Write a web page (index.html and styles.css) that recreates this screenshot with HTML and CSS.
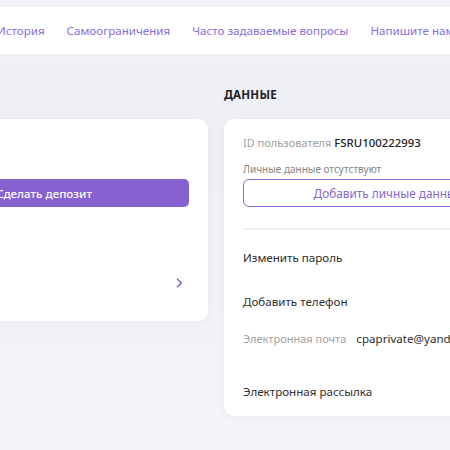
FILE: index.html
```html
<!DOCTYPE html>
<html lang="ru">
<head>
<meta charset="utf-8">
<link rel="stylesheet" href="styles.css">
</head>
<body>
<div class="top-gap"></div>
<nav class="nav">
  <a class="nav-item">История</a>
  <a class="nav-item">Самоограничения</a>
  <a class="nav-item">Часто задаваемые вопросы</a>
  <a class="nav-item">Напишите нам</a>
</nav>
<main class="main">
  <section class="col">
    <div class="col-title"></div>
    <div class="card card-left">
      <div class="balance"></div>
      <button class="btn-primary">Сделать депозит</button>
      <div class="link-row">
        <svg class="chev" width="7" height="10" viewBox="0 0 7 10"><path d="M1.5 1.2 L5.2 5 L1.5 8.8" fill="none" stroke="#7f5fd6" stroke-width="1.6" stroke-linecap="round" stroke-linejoin="round"/></svg>
      </div>
    </div>
  </section>
  <section class="col">
    <h2 class="col-title">Данные</h2>
    <div class="card card-right">
      <div class="id-row"><span class="muted">ID пользователя</span> <span class="strong">FSRU100222993</span></div>
      <div class="note">Личные данные отсутствуют</div>
      <button class="btn-outline">Добавить личные данные</button>
      <div class="divider"></div>
      <div class="item item-1">Изменить пароль</div>
      <div class="item item-2">Добавить телефон</div>
      <div class="item item-3"><span class="muted">Электронная почта</span><span class="email">cpaprivate@yandex.ru</span></div>
      <div class="item item-4">Электронная рассылка</div>
    </div>
  </section>
</main>
</body>
</html>
```
FILE: styles.css
```css
* { box-sizing: border-box; }
html, body { margin: 0; padding: 0; }
body {
  width: 450px;
  height: 450px;
  overflow: hidden;
  background: linear-gradient(180deg, #f1f2f6 0%, #eeeff4 30%, #f4f5f9 100%);
  font-family: "Noto Sans", "DejaVu Sans", sans-serif;
  color: #333;
}
.top-gap { height: 7px; }
.nav {
  height: 47px;
  background: #fff;
  display: flex;
  align-items: center;
  gap: 22px;
  white-space: nowrap;
  margin-left: -3px;
}
.nav-item {
  font-size: 11.6px;
  color: #8a6ed8;
  text-decoration: none;
  flex-shrink: 0;
}
.main {
  display: flex;
  gap: 16px;
  margin-left: -120px;
  padding-top: 33px;
}
.col { width: 328px; flex-shrink: 0; }
.col-title {
  height: 16px;
  margin: 0 0 16px 0;
  font-size: 11.5px;
  line-height: 16px;
  font-weight: 700;
  text-transform: uppercase;
  color: #222;
  letter-spacing: 0.2px;
}
.card {
  background: #fff;
  border-radius: 10px;
  padding: 0 19px;
  box-shadow: 0 2px 10px rgba(40, 40, 90, 0.04);
}
.card-left {
  height: 202px;
  display: flex;
  flex-direction: column;
}
.balance { height: 60px; }
.btn-primary {
  height: 28px;
  width: 100%;
  border: none;
  border-radius: 5px;
  background: #8662d0;
  color: #fff;
  font-family: inherit;
  font-size: 11.6px;
  font-weight: 500;
}
.link-row {
  margin-top: 64px;
  height: 24px;
  display: flex;
  align-items: center;
  justify-content: flex-end;
  padding-right: 6px;
}
.chev { display: block; }
.card-right {
  height: 297px;
  padding-top: 16px;
}
.id-row { font-size: 11.5px; line-height: 16px; white-space: nowrap; }
.muted { color: #a2a2a2; font-size: 11px; }
.strong { color: #222; font-weight: 500; font-size: 11.4px; }
.note {
  margin-top: 11px;
  font-size: 10px;
  line-height: 14px;
  color: #858585;
}
.btn-outline {
  display: block;
  margin-top: 3px;
  width: 100%;
  height: 28px;
  border: 1.5px solid #8a66d2;
  border-radius: 6px;
  background: #fff;
  color: #8a66d2;
  font-family: inherit;
  font-size: 11.8px;
  white-space: nowrap;
}
.divider {
  margin-top: 21px;
  height: 2px;
  background: #efeff2;
}
.item {
  font-size: 11.6px;
  line-height: 16px;
  color: #2e2e2e;
  white-space: nowrap;
}
.item-1 { margin-top: 20px; }
.item-2 { margin-top: 28px; }
.item-3 { margin-top: 21px; }
.item-4 { margin-top: 37px; }
.email { margin-left: 10px; color: #2e2e2e; }
```
